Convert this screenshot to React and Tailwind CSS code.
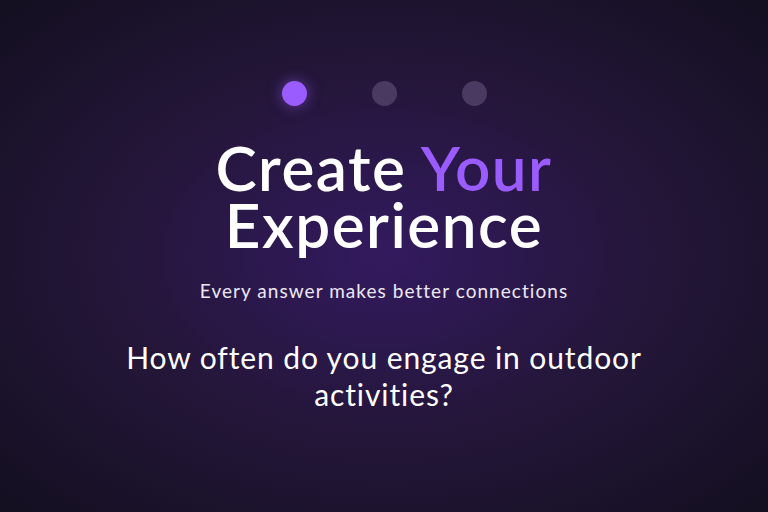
export default function App() {
  return (
    <div
      className="w-[768px] h-[512px] overflow-hidden flex flex-col items-center text-white bg-[radial-gradient(ellipse_at_center,#331a5f_0%,#241639_50%,#130f20_100%)] [font-variant-ligatures:none]"
      style={{ fontFamily: "Lato, 'Noto Sans', sans-serif" }}
    >
      <div className="flex items-center gap-[65px] mt-[81px]">
        <div className="w-[25px] h-[25px] rounded-full bg-[#9b5cff] shadow-[0_0_14px_rgba(155,92,255,0.55)]" />
        <div className="w-[25px] h-[25px] rounded-full bg-[#4a3a62]" />
        <div className="w-[25px] h-[25px] rounded-full bg-[#4a3a62]" />
      </div>
      <h1 className="mt-[33px] text-[62px] leading-[57px] font-semibold text-center tracking-[1.5px] whitespace-nowrap">
        Create <span className="text-[#9b5cff]">Your</span>
        <br />
        Experience
      </h1>
      <p className="mt-[26px] text-[19px] leading-[24px] text-[#ece8f5] tracking-[1.05px] whitespace-nowrap">
        Every answer makes better connections
      </p>
      <p className="mt-[36px] text-[30px] leading-[37px] text-center w-[600px] tracking-[0.9px]">
        How often do you engage in outdoor
        <br />
        activities?
      </p>
    </div>
  );
}
